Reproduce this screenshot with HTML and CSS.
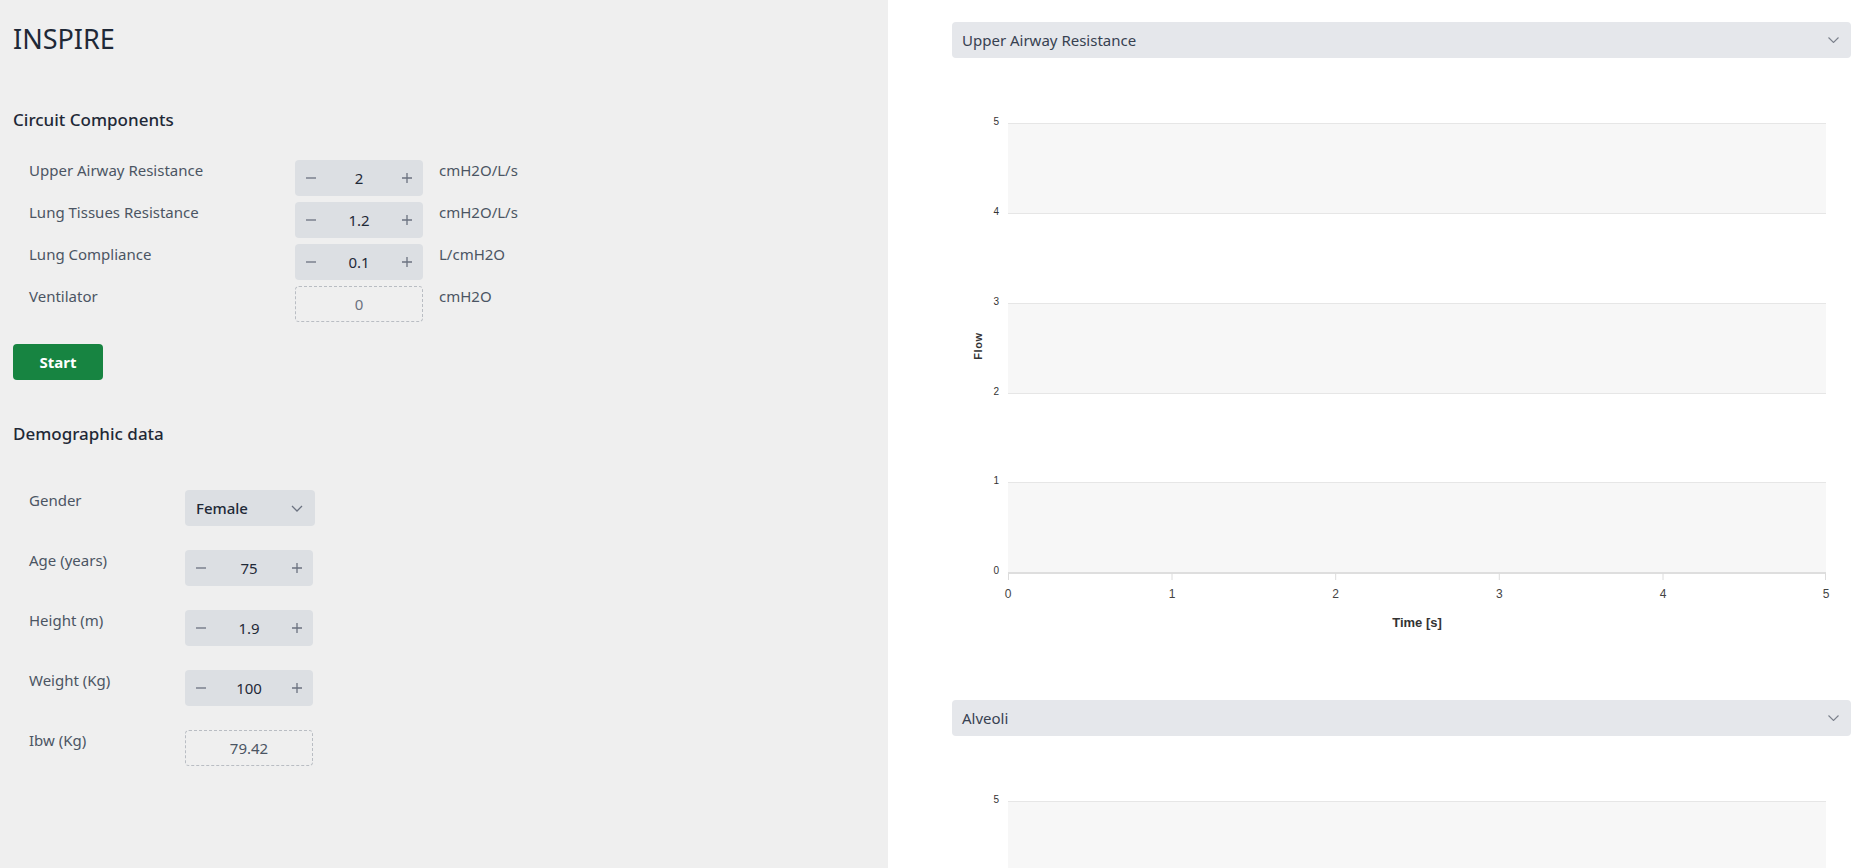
FILE: index.html
```html
<!DOCTYPE html>
<html lang="en">
<head>
<meta charset="utf-8">
<title>INSPIRE</title>
<link rel="stylesheet" href="styles.css">
</head>
<body>
<div class="app">
  <aside class="left">
    <h1 class="title">INSPIRE</h1>

    <h2 class="section-title">Circuit Components</h2>
    <div class="circuit">
      <div class="row">
        <span class="label">Upper Airway Resistance</span>
        <div class="stepper">
          <svg class="ico" viewBox="0 0 12 12"><path d="M1 6h10"/></svg>
          <span class="value">2</span>
          <svg class="ico" viewBox="0 0 12 12"><path d="M6 1v10M1 6h10"/></svg>
        </div>
        <span class="unit">cmH2O/L/s</span>
      </div>
      <div class="row">
        <span class="label">Lung Tissues Resistance</span>
        <div class="stepper">
          <svg class="ico" viewBox="0 0 12 12"><path d="M1 6h10"/></svg>
          <span class="value">1.2</span>
          <svg class="ico" viewBox="0 0 12 12"><path d="M6 1v10M1 6h10"/></svg>
        </div>
        <span class="unit">cmH2O/L/s</span>
      </div>
      <div class="row">
        <span class="label">Lung Compliance</span>
        <div class="stepper">
          <svg class="ico" viewBox="0 0 12 12"><path d="M1 6h10"/></svg>
          <span class="value">0.1</span>
          <svg class="ico" viewBox="0 0 12 12"><path d="M6 1v10M1 6h10"/></svg>
        </div>
        <span class="unit">L/cmH2O</span>
      </div>
      <div class="row">
        <span class="label">Ventilator</span>
        <div class="readonly">0</div>
        <span class="unit">cmH2O</span>
      </div>
    </div>

    <button class="start" type="button">Start</button>

    <h2 class="section-title demo-title">Demographic data</h2>
    <div class="demo">
      <div class="drow">
        <span class="label">Gender</span>
        <div class="select">
          <span>Female</span>
          <svg class="chev" viewBox="0 0 12 7"><path d="M1 1l5 5 5-5"/></svg>
        </div>
      </div>
      <div class="drow">
        <span class="label">Age (years)</span>
        <div class="stepper">
          <svg class="ico" viewBox="0 0 12 12"><path d="M1 6h10"/></svg>
          <span class="value">75</span>
          <svg class="ico" viewBox="0 0 12 12"><path d="M6 1v10M1 6h10"/></svg>
        </div>
      </div>
      <div class="drow">
        <span class="label">Height (m)</span>
        <div class="stepper">
          <svg class="ico" viewBox="0 0 12 12"><path d="M1 6h10"/></svg>
          <span class="value">1.9</span>
          <svg class="ico" viewBox="0 0 12 12"><path d="M6 1v10M1 6h10"/></svg>
        </div>
      </div>
      <div class="drow">
        <span class="label">Weight (Kg)</span>
        <div class="stepper">
          <svg class="ico" viewBox="0 0 12 12"><path d="M1 6h10"/></svg>
          <span class="value">100</span>
          <svg class="ico" viewBox="0 0 12 12"><path d="M6 1v10M1 6h10"/></svg>
        </div>
      </div>
      <div class="drow">
        <span class="label">Ibw (Kg)</span>
        <div class="readonly ibw">79.42</div>
      </div>
    </div>
  </aside>

  <main class="right">
    <section class="card">
      <div class="acc-header">
        <span>Upper Airway Resistance</span>
        <svg class="acc-chev" viewBox="0 0 11 6"><path d="M0.5 0.5l5 5 5-5"/></svg>
      </div>
      <svg class="chart" width="899" height="642" viewBox="0 0 899 642">
        <g class="bands">
          <rect x="56" y="65.5" width="818" height="89.8"/>
          <rect x="56" y="245.1" width="818" height="89.8"/>
          <rect x="56" y="424.7" width="818" height="89.8"/>
        </g>
        <g class="grid">
          <path d="M56 65.5H874M56 155.5H874M56 245.5H874M56 335.5H874M56 424.5H874"/>
        </g>
        <path class="xaxis" d="M56 515H874"/>
        <path class="ticks" d="M56.5 515v7M220 515v7M383.7 515v7M547.3 515v7M711 515v7M873.5 515v7"/>
        <g class="ylab">
          <text x="47" y="67">5</text>
          <text x="47" y="157">4</text>
          <text x="47" y="247">3</text>
          <text x="47" y="337">2</text>
          <text x="47" y="426">1</text>
          <text x="47" y="516">0</text>
        </g>
        <g class="xlab">
          <text x="56" y="540">0</text>
          <text x="220" y="540">1</text>
          <text x="383.7" y="540">2</text>
          <text x="547.3" y="540">3</text>
          <text x="711" y="540">4</text>
          <text x="874" y="540">5</text>
        </g>
        <text class="ytitle" transform="translate(30 288) rotate(-90)">Flow</text>
        <text class="xtitle" x="465" y="569">Time [s]</text>
      </svg>
    </section>

    <section class="card">
      <div class="acc-header">
        <span>Alveoli</span>
        <svg class="acc-chev" viewBox="0 0 11 6"><path d="M0.5 0.5l5 5 5-5"/></svg>
      </div>
      <svg class="chart chart-partial" width="899" height="132" viewBox="0 0 899 132">
        <g class="bands">
          <rect x="56" y="65.5" width="818" height="89.8"/>
        </g>
        <g class="grid">
          <path d="M56 65.5H874"/>
        </g>
        <g class="ylab">
          <text x="47" y="67">5</text>
        </g>
      </svg>
    </section>
  </main>
</div>
</body>
</html>
```

FILE: styles.css
```css
html, body {
  margin: 0;
  padding: 0;
  height: 868px;
  overflow: hidden;
  font-family: "Noto Sans", "Open Sans", sans-serif;
}

.app {
  display: flex;
  height: 868px;
}

.left {
  flex: none;
  width: 888px;
  box-sizing: border-box;
  background: #efefef;
  padding-left: 13px;
}

.title {
  margin: 21px 0 0;
  font-size: 27px;
  line-height: 36px;
  font-weight: 400;
  color: #1f2937;
}

.section-title {
  margin: 49px 0 0;
  font-size: 17px;
  line-height: 28px;
  font-weight: 500;
  color: #1f2937;
}

.demo-title {
  margin-top: 40px;
}

.circuit {
  margin-top: 26px;
  padding-left: 16px;
  display: flex;
  flex-direction: column;
  gap: 6px;
}

.row {
  display: grid;
  grid-template-columns: 250px 128px auto;
  column-gap: 16px;
  align-items: start;
}

.label,
.unit {
  font-size: 15px;
  line-height: 20px;
  color: #4b5563;
}

.stepper {
  box-sizing: border-box;
  width: 128px;
  height: 36px;
  background: #dcdfe3;
  border-radius: 4px;
  display: flex;
  align-items: center;
  justify-content: space-between;
  padding: 0 10px;
}

.ico {
  width: 12px;
  height: 12px;
  fill: none;
  stroke: #6b7280;
  stroke-width: 1.3;
}

.value {
  font-size: 15px;
  color: #1f2937;
}

.readonly {
  box-sizing: border-box;
  width: 128px;
  height: 36px;
  border: 1px dashed #b9bdc3;
  border-radius: 4px;
  display: flex;
  align-items: center;
  justify-content: center;
  font-size: 15px;
  color: #6b7280;
}

.ibw {
  color: #4b5563;
}

.start {
  display: block;
  margin-top: 22px;
  width: 90px;
  height: 36px;
  border: none;
  border-radius: 4px;
  background: #178441;
  color: #ffffff;
  font-family: "Noto Sans", sans-serif;
  font-size: 15px;
  font-weight: 700;
  padding: 0;
}

.demo {
  margin-top: 42px;
  padding-left: 16px;
  display: flex;
  flex-direction: column;
  gap: 24px;
}

.drow {
  display: grid;
  grid-template-columns: 156px auto;
  align-items: start;
}

.select {
  box-sizing: border-box;
  width: 130px;
  height: 36px;
  background: #dcdfe3;
  border-radius: 4px;
  display: flex;
  align-items: center;
  justify-content: space-between;
  padding: 0 12px 0 11px;
  font-size: 15px;
  font-weight: 500;
  color: #1f2937;
}

.chev {
  width: 12px;
  height: 7px;
  fill: none;
  stroke: #6b7280;
  stroke-width: 1.3;
}

.right {
  flex: 1;
  background: #ffffff;
  padding: 22px 20px 0 64px;
  min-width: 0;
  height: 868px;
  box-sizing: border-box;
  overflow: hidden;
}

.card {
  width: 899px;
}

.acc-header {
  box-sizing: border-box;
  height: 36px;
  background: #e5e7eb;
  border-radius: 4px;
  display: flex;
  align-items: center;
  justify-content: space-between;
  padding: 0 12px 0 10px;
  font-size: 15px;
  color: #374151;
}

.acc-chev {
  width: 11px;
  height: 6px;
  fill: none;
  stroke: #7b818c;
  stroke-width: 1.1;
}

.chart {
  display: block;
  font-family: "Liberation Sans", Arial, sans-serif;
}

.bands rect {
  fill: #f7f7f7;
}

.grid path {
  stroke: #e6e6e6;
  stroke-width: 1;
  fill: none;
}

.xaxis {
  stroke: #dedede;
  stroke-width: 2;
  fill: none;
}

.ticks {
  stroke: #dcdcdc;
  stroke-width: 1;
  fill: none;
}

.ylab text {
  font-size: 10px;
  fill: #333333;
  text-anchor: end;
}

.xlab text {
  font-size: 12px;
  fill: #444444;
  text-anchor: middle;
}

.ytitle {
  font-size: 11px;
  font-weight: 700;
  fill: #333333;
  text-anchor: middle;
  letter-spacing: 0.6px;
}

.xtitle {
  font-size: 13px;
  font-weight: 700;
  fill: #333333;
  text-anchor: middle;
}
```
